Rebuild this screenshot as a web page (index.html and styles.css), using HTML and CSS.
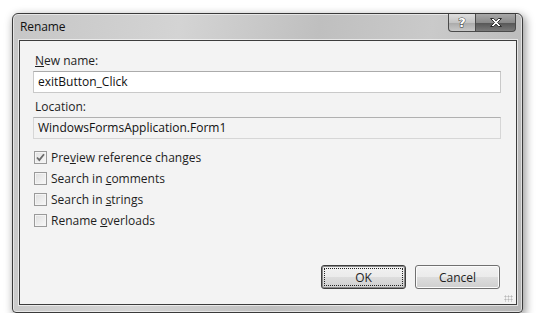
FILE: index.html
```html
<!DOCTYPE html>
<html lang="en">
<head>
<meta charset="utf-8">
<title>Rename</title>
<link rel="stylesheet" href="styles.css">
</head>
<body>
<div class="window">
  <div class="titlebar">
    <span class="title">Rename</span>
    <div class="caption-btns">
      <span class="cap help">?</span>
      <span class="cap close">
        <svg width="16" height="11" viewBox="0 0 16 11">
          <path d="M2.5 1.5h3.2l2.3 2.4 2.3-2.4h3.2l-3.9 4 3.9 4h-3.2L8 7.1 5.7 9.5H2.5l3.9-4z" fill="#fff" stroke="#2b2b2b" stroke-width="1"/>
        </svg>
      </span>
    </div>
  </div>

  <div class="client">
    <label class="field-label"><u>N</u>ew name:</label>
    <div class="textbox">exitButton_Click</div>

    <label class="field-label">Location:</label>
    <div class="textbox readonly">WindowsFormsApplication.Form1</div>

    <ul class="options">
      <li><span class="check checked">
        <svg width="9" height="9" viewBox="0 0 9 9"><path d="M1 4.5l2.3 2.5L8 1.2" fill="none" stroke="#6a6a6a" stroke-width="1.8"/></svg>
      </span><span>Pre<u>v</u>iew reference changes</span></li>
      <li><span class="check"></span><span>Search in <u>c</u>omments</span></li>
      <li><span class="check"></span><span>Search in <u>s</u>trings</span></li>
      <li><span class="check"></span><span>Rename <u>o</u>verloads</span></li>
    </ul>

    <div class="buttons">
      <button class="btn default"><span class="focus">OK</span></button>
      <button class="btn">Cancel</button>
    </div>
    <span class="grip"></span>
  </div>
</div>
</body>
</html>
```

FILE: styles.css
```css
/* ── base ─────────────────────────────── */
*,*::before,*::after{box-sizing:border-box}
body{margin:0;background:#fff;
     font-family:"Open Sans","Noto Sans","DejaVu Sans",sans-serif;
     font-size:12px;color:#1b1b1b}

/* ── window frame ─────────────────────── */
.window{width:511px;height:300px;margin:13px 0 0 12px;
        display:flex;flex-direction:column;
        border:1px solid #3a3a3a;border-radius:6px 6px 4px 4px;
        background:linear-gradient(100deg,#c6c6c6 0%,#d4d4d4 30%,#bfbfbf 55%,#cacaca 75%,#b6b6b6 100%);
        box-shadow:2px 3px 9px 1px rgba(0,0,0,.38),inset 0 0 0 1px rgba(255,255,255,.55)}

.titlebar{height:26px;display:flex;align-items:flex-start;
          justify-content:space-between;padding-left:7px;flex:none}
.title{margin-top:4px;font-size:12px;color:#111;letter-spacing:-.1px}

.caption-btns{display:flex;margin-right:6px}
.cap{height:18px;display:flex;align-items:center;justify-content:center;
     border:1px solid #4a4a4a;border-top:none}
.help{width:27px;border-radius:0 0 0 4px;border-right:none;
      background:linear-gradient(#dedede,#c4c4c4 50%,#a9a9a9 51%,#c8c8c8);
      font:bold 13px "DejaVu Sans",sans-serif;color:#fff;
      -webkit-text-stroke:1px #3a3a3a;paint-order:stroke fill}
.close{width:41px;border-radius:0 0 4px 0;
       background:linear-gradient(#a8a8a8,#8a8a8a 50%,#555 51%,#7a7a7a)}
.close svg{display:block}

/* ── client area ──────────────────────── */
.client{flex:1;margin:0 5px 7px 6px;position:relative;
        background:#f3f3f3;border:1px solid #3c3c3c;
        box-shadow:0 0 0 1px rgba(255,255,255,.6);
        padding:12px 15px 0 13px;display:flex;flex-direction:column}

.field-label{display:block;line-height:16px;margin-left:2px;color:#1e1e1e}
.textbox{height:22px;margin:2px 0 6px;padding:2px 0 0 4px;line-height:16px;
         background:#fff;border:1px solid #c9c9c9;border-top-color:#ababab;
         color:#111}
.textbox.readonly{background:#f3f3f3;border-color:#d6d6d6;border-top-color:#b0b0b0}

/* ── checkboxes ───────────────────────── */
.options{list-style:none;margin:2px 0 0;padding:0}
.options li{display:flex;align-items:center;height:21px;color:#1e1e1e}
.check{width:13px;height:13px;margin:0 4px 0 1px;flex:none;
       border:1px solid #9a9a9a;
       background:linear-gradient(135deg,#dedede,#f8f8f8);
       box-shadow:inset 0 0 0 1px #f4f4f4;
       display:flex;align-items:center;justify-content:center}
.check.checked{background:linear-gradient(135deg,#e2e2e2,#f6f6f6)}
.check svg{display:block}

/* ── buttons ──────────────────────────── */
.buttons{display:flex;justify-content:flex-end;gap:9px;
         margin-top:auto;margin-bottom:15px;padding-right:1px}
.btn{width:85px;height:24px;padding:2px;font:inherit;color:#1e1e1e;
     border:1px solid #707070;border-radius:3px;
     background:linear-gradient(#f2f2f2,#ebebeb 50%,#dddddd 51%,#cfcfcf);
     box-shadow:inset 0 0 0 1px #fbfbfb}
.btn.default{border-color:#3c3c3c;box-shadow:inset 0 0 0 1px #8a8a8a}
.focus{display:flex;height:100%;align-items:center;justify-content:center;
       border:1px dotted #222}

.grip{position:absolute;right:3px;bottom:2px;width:9px;height:7px;
      background:radial-gradient(circle,#b9b9b9 45%,transparent 50%) 0 0/3px 3px}
```
